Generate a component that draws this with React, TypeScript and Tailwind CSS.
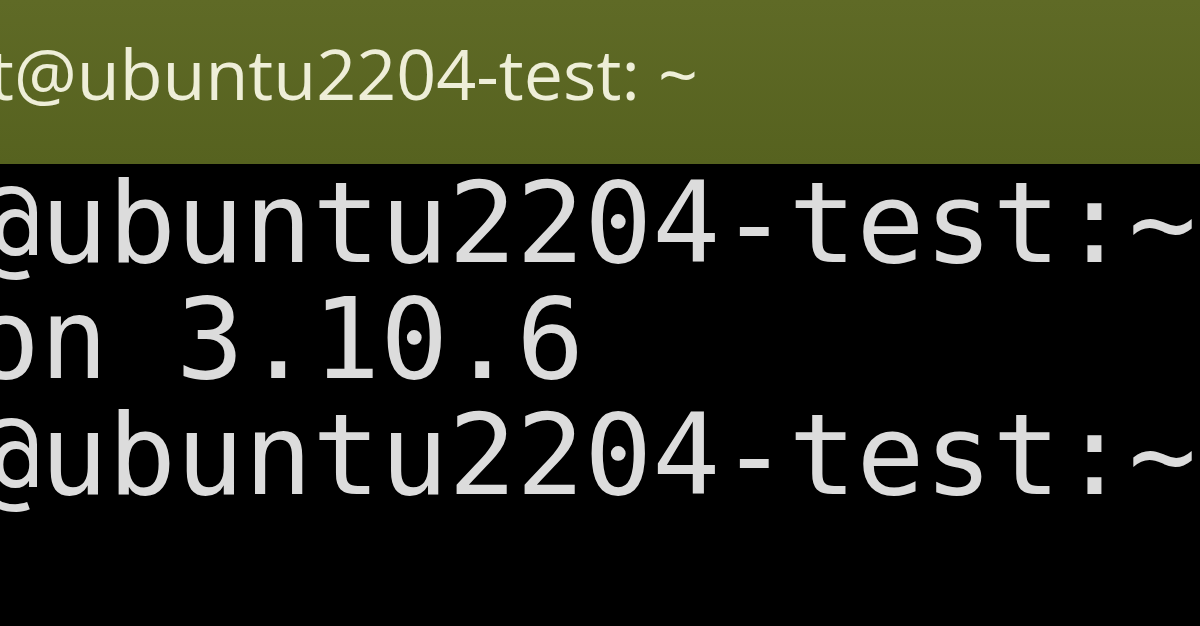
import React from "react";

export default function App() {
  const lines = ["@ubuntu2204-test:~", "on 3.10.6", "@ubuntu2204-test:~"];
  return (
    <div className="w-[1200px] h-[626px] overflow-hidden bg-black flex flex-col">
      <div className="h-[164px] shrink-0 bg-gradient-to-b from-[#5f6a26] to-[#56621f] overflow-hidden">
        <div
          className="ml-[-11px] pt-[38px] whitespace-nowrap text-[70px] leading-[70px] text-[#eeeed8]"
          style={{ fontFamily: '"Open Sans", sans-serif' }}
        >
          t@ubuntu2204-test: ~
        </div>
      </div>
      <div className="flex-1 bg-black overflow-hidden pt-[1px]">
        <div
          className="ml-[-28px] flex flex-col text-[113px] leading-[116px] text-[#dcdcdc] whitespace-pre"
          style={{ fontFamily: '"DejaVu Sans Mono", monospace' }}
        >
          {lines.map((l, i) => (
            <div key={i}>{l}</div>
          ))}
        </div>
      </div>
    </div>
  );
}
